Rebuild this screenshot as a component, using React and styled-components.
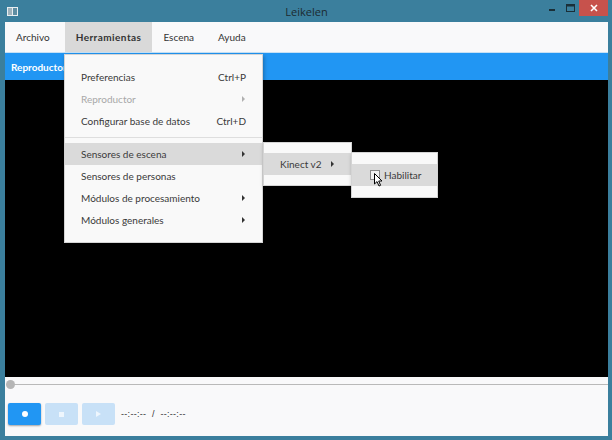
import React from "react";
import styled, { createGlobalStyle } from "styled-components";

const Global = createGlobalStyle`
  html, body { margin: 0; padding: 0; width: 612px; height: 440px; overflow: hidden; }
  body { font-family: Lato, "Open Sans", sans-serif; }
  * { box-sizing: border-box; }
`;

const Frame = styled.div`
  position: relative;
  width: 612px;
  height: 440px;
  background: #3b7f9d;
  display: flex;
  flex-direction: column;
  padding: 0 4px 4px 5px;
`;

const TitleBar = styled.div`
  height: 22px;
  display: flex;
  align-items: center;
  position: relative;
  flex-shrink: 0;
`;

const AppIcon = styled.svg`
  position: absolute;
  left: 2px;
  top: 7px;
`;

const Title = styled.div`
  flex: 1;
  text-align: center;
  font-family: "Open Sans", sans-serif;
  font-size: 11px;
  color: #1c2a30;
  padding-top: 1px;
`;

const WinButtons = styled.div`
  position: absolute;
  right: 0;
  top: 0;
  display: flex;
  align-items: flex-start;
`;

const WinBtn = styled.div`
  width: ${(p) => p.$w}px;
  height: 16px;
  display: flex;
  align-items: center;
  justify-content: center;
  background: ${(p) => (p.$close ? "#c7524c" : "transparent")};
`;

const Body = styled.div`
  flex: 1;
  display: flex;
  flex-direction: column;
  background: #f9f9fa;
`;

const MenuBar = styled.div`
  height: 30px;
  display: flex;
  background: #f9f9fa;
  flex-shrink: 0;
`;

const MenuItem = styled.div`
  display: flex;
  align-items: center;
  padding: 0 ${(p) => p.$right}px 0 ${(p) => p.$left}px;
  font-size: 10px;
  color: #333;
  font-weight: ${(p) => (p.$active ? 700 : 400)};
  letter-spacing: ${(p) => (p.$active ? "0.45px" : "0")};
  background: ${(p) => (p.$active ? "#d9d9d9" : "transparent")};
`;

const TabBar = styled.div`
  height: 28px;
  background: #2196f3;
  border-top: 1px solid #c7e1f5;
  display: flex;
  align-items: center;
  padding-left: 6px;
  flex-shrink: 0;
`;

const TabLabel = styled.div`
  color: #fff;
  font-weight: 700;
  font-size: 10px;
`;

const Video = styled.div`
  flex: 1;
  background: #000;
`;

const Controls = styled.div`
  height: 59px;
  display: flex;
  flex-direction: column;
  flex-shrink: 0;
`;

const SliderRow = styled.div`
  height: 15px;
  position: relative;
  display: flex;
  align-items: center;
  padding-left: 1px;
`;

const Track = styled.div`
  flex: 1;
  height: 1px;
  background: #b9b9b9;
`;

const Thumb = styled.div`
  position: absolute;
  left: 1px;
  top: 3px;
  width: 9px;
  height: 9px;
  border-radius: 50%;
  background: #b5b5b5;
`;

const ButtonRow = styled.div`
  display: flex;
  align-items: center;
  gap: 4px;
  padding: 11px 0 0 3px;
`;

const CtrlBtn = styled.div`
  width: 33px;
  height: 22px;
  border-radius: 2px;
  background: ${(p) => (p.$on ? "#2196f3" : "#c8e1f7")};
  box-shadow: ${(p) => (p.$on ? "0 1px 2px rgba(0,0,0,0.35)" : "none")};
  display: flex;
  align-items: center;
  justify-content: center;
`;

const Dot = styled.div`
  width: 6px;
  height: 6px;
  border-radius: 50%;
  background: #fff;
`;

const Square = styled.div`
  width: 5px;
  height: 5px;
  background: #eef6fd;
`;

const Tri = styled.div`
  width: 0;
  height: 0;
  border-left: 5px solid #eef6fd;
  border-top: 3px solid transparent;
  border-bottom: 3px solid transparent;
`;

const Time = styled.div`
  font-family: "Liberation Sans", sans-serif;
  font-size: 9px;
  letter-spacing: 0.3px;
  color: #333;
  margin-left: 2px;
  white-space: pre;
`;

const Popup = styled.div`
  position: absolute;
  left: ${(p) => p.$x}px;
  top: ${(p) => p.$y}px;
  width: ${(p) => p.$w}px;
  padding: ${(p) => p.$pad}px 0;
  background: #f9f9f9;
  border: 1px solid #d4d4d4;
  box-shadow: 1px 2px 4px rgba(0, 0, 0, 0.3);
  font-size: 10px;
  color: #3a3a3a;
`;

const PItem = styled.div`
  height: 22px;
  display: flex;
  align-items: center;
  padding: 0 14px 0 ${(p) => p.$left}px;
  background: ${(p) => (p.$hl ? "#dadada" : "transparent")};
  color: ${(p) => (p.$dis ? "#a8a8a8" : "#3a3a3a")};
`;

const PLabel = styled.span`
  flex: 1;
  white-space: nowrap;
`;

const Shortcut = styled.span`
  white-space: nowrap;
  margin-right: 2px;
`;

const Arrow = styled.span`
  width: 0;
  height: 0;
  border-left: 3px solid ${(p) => (p.$dis ? "#b0b0b0" : "#333")};
  border-top: 3px solid transparent;
  border-bottom: 3px solid transparent;
  margin-right: 3px;
`;

const Sep = styled.div`
  height: 11px;
  display: flex;
  align-items: center;
  &::after {
    content: "";
    flex: 1;
    height: 1px;
    background: #dedede;
  }
`;

const Check = styled.span`
  width: 10px;
  height: 10px;
  border: 1px solid #8a8a8a;
  background: #f2f2f2;
  margin-right: 4px;
`;

const Cursor = styled.svg`
  position: absolute;
  left: 374px;
  top: 173px;
`;

const mainItems = [
  { label: "Preferencias", sc: "Ctrl+P" },
  { label: "Reproductor", arrow: true, dis: true },
  { label: "Configurar base de datos", sc: "Ctrl+D" },
  { sep: true },
  { label: "Sensores de escena", arrow: true, hl: true },
  { label: "Sensores de personas" },
  { label: "Módulos de procesamiento", arrow: true },
  { label: "Módulos generales", arrow: true },
];

export default function App() {
  return (
    <>
      <Global />
      <Frame>
        <TitleBar>
          <AppIcon width="11" height="9" viewBox="0 0 11 9">
            <rect x="0" y="0" width="11" height="9" fill="#e8eef1" />
            <rect x="1" y="1" width="4" height="7" fill="#9fb3bd" />
            <rect x="6" y="1" width="4" height="7" fill="#5f8ea3" />
          </AppIcon>
          <Title>Leikelen</Title>
          <WinButtons>
            <WinBtn $w={18}>
              <svg width="8" height="8" viewBox="0 0 8 8">
                <rect x="1" y="5" width="6" height="2" fill="#1a2f38" />
              </svg>
            </WinBtn>
            <WinBtn $w={18}>
              <svg width="9" height="8" viewBox="0 0 9 8">
                <rect x="0.5" y="0.5" width="8" height="7" fill="none" stroke="#1a2f38" />
                <rect x="0.5" y="0.5" width="8" height="2" fill="#1a2f38" />
              </svg>
            </WinBtn>
            <WinBtn $w={29} $close>
              <svg width="8" height="8" viewBox="0 0 8 8">
                <path d="M1 1L7 7M7 1L1 7" stroke="#fff" strokeWidth="1.6" />
              </svg>
            </WinBtn>
          </WinButtons>
        </TitleBar>
        <Body>
          <MenuBar>
            <MenuItem $left={11} $right={15}>Archivo</MenuItem>
            <MenuItem $left={11} $right={11} $active>Herramientas</MenuItem>
            <MenuItem $left={11} $right={11}>Escena</MenuItem>
            <MenuItem $left={13} $right={11}>Ayuda</MenuItem>
          </MenuBar>
          <TabBar>
            <TabLabel>Reproductor</TabLabel>
          </TabBar>
          <Video />
          <Controls>
            <SliderRow>
              <Track />
              <Thumb />
            </SliderRow>
            <ButtonRow>
              <CtrlBtn $on><Dot /></CtrlBtn>
              <CtrlBtn><Square /></CtrlBtn>
              <CtrlBtn><Tri /></CtrlBtn>
              <Time>{"--:--:--  /  --:--:--"}</Time>
            </ButtonRow>
          </Controls>
        </Body>

        <Popup $x={64} $y={54} $w={199} $pad={11}>
          {mainItems.map((it, i) =>
            it.sep ? (
              <Sep key={i} />
            ) : (
              <PItem key={i} $left={16} $hl={it.hl} $dis={it.dis}>
                <PLabel>{it.label}</PLabel>
                {it.sc && <Shortcut>{it.sc}</Shortcut>}
                {it.arrow && <Arrow $dis={it.dis} />}
              </PItem>
            )
          )}
        </Popup>
        <Popup $x={263} $y={142} $w={89} $pad={10}>
          <PItem $left={16} $hl>
            <PLabel>Kinect v2</PLabel>
            <Arrow />
          </PItem>
        </Popup>
        <Popup $x={351} $y={152} $w={87} $pad={11}>
          <PItem $left={18} $hl>
            <Check />
            <PLabel>Habilitar</PLabel>
          </PItem>
        </Popup>
        <Cursor width="10" height="14" viewBox="0 0 10 14">
          <path d="M0.5 0.5 L0.5 11 L3 8.6 L5 13 L6.6 12.3 L4.7 8 L8 8 Z" fill="#fff" stroke="#000" strokeWidth="1" strokeLinejoin="round" />
        </Cursor>
      </Frame>
    </>
  );
}
